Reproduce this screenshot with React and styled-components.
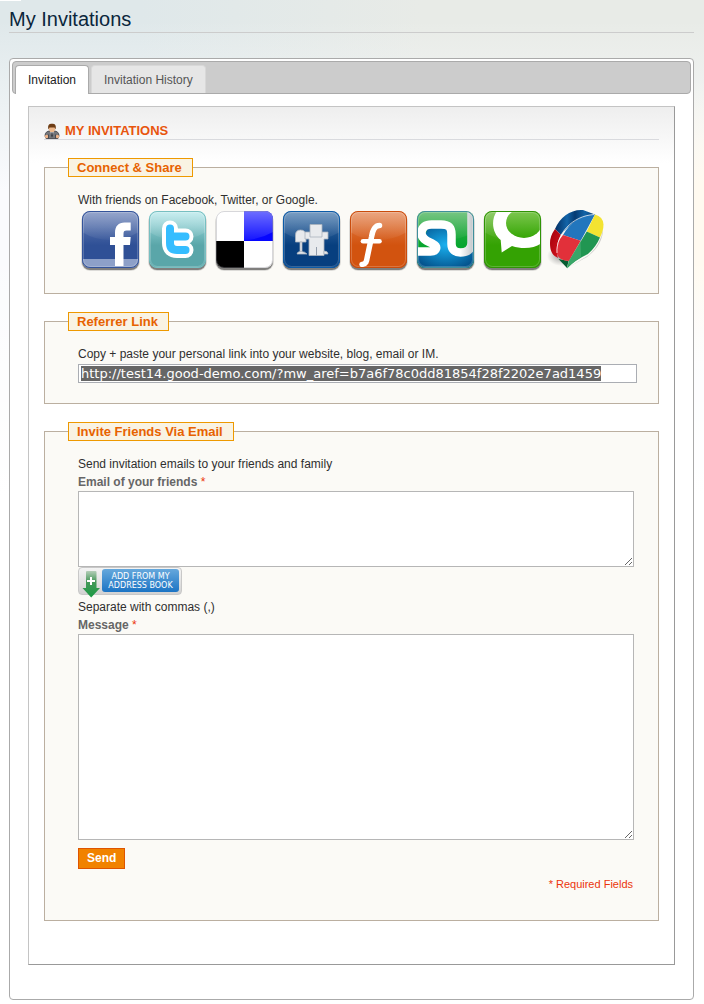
import React, { useEffect, useRef, useState } from "react";
import styled, { createGlobalStyle } from "styled-components";

const GlobalStyle = createGlobalStyle`
  * {
    box-sizing: border-box;
  }

  body {
    margin: 0;
    color: #2f2f2f;
    font: 12px/18px "Liberation Sans", Arial, sans-serif;
    background:
      linear-gradient(#fff, #fff) 0 0 / 21px 1px no-repeat,
      linear-gradient(180deg, rgba(255, 255, 255, 0) 240px, #fff 500px),
      radial-gradient(ellipse 300px 150px at 100% 230px, #fffaf0 30%, rgba(255, 250, 240, 0)),
      linear-gradient(180deg, rgba(250, 251, 253, 0) 20px, #fafbfd 190px),
      linear-gradient(90deg, #dfe8ea 20%, #e8ebe7 60%);
  }
`;

const Page = styled.main`
  padding: 0 10px 4px 9px;
`;

const PageTitle = styled.h1`
  margin: 0 0 25px;
  padding-top: 6px;
  border-bottom: 1px solid #ccc;
  color: #0a263c;
  font-size: 20px;
  font-weight: normal;
  line-height: 26px;
`;

const TabBox = styled.div`
  padding: 2px;
  border: 1px solid #aaa;
  border-radius: 4px;
  background: #fff;
`;

const TabBar = styled.div`
  display: flex;
  gap: 2px;
  height: 33px;
  padding: 3px 2px 0;
  border: 1px solid #aaa;
  border-radius: 4px;
  background: #ccc;
`;

const Tab = styled.button`
  height: ${(props) => (props.$active ? 29 : 28)}px;
  padding: 0 12px;
  border: 1px solid ${(props) => (props.$active ? "#aaa" : "#d8d8d8")};
  border-bottom: 0;
  border-radius: 4px 4px 0 0;
  background: ${(props) => (props.$active ? "#fff" : "#e6e6e6")};
  color: ${(props) => (props.$active ? "#212121" : "#555")};
  font: inherit;
  cursor: pointer;
`;

const Panel = styled.section`
  margin: 12px 16px 32px;
  padding: 15px 15px 43px;
  border: 1px solid #999;
  border-top-color: #c4c4c4;
  border-left-color: #c4c4c4;
  background: #fff linear-gradient(#eee, #fff) 0 0 / 100% 56px no-repeat;
`;

const PanelTitle = styled.h2`
  display: flex;
  align-items: center;
  gap: 5px;
  height: 18px;
  margin: 0 0 18px;
  border-bottom: 1px solid #d9dade;
  color: #e8550e;
  font-size: 13px;
`;

const Fieldset = styled.fieldset`
  min-width: 0;
  margin: 0 0 18px;
  padding: 14px ${(props) => (props.$wide ? 21 : 24)}px 20px 33px;
  border: 1px solid #bbafa0;
  background: #fbfaf6;

  &:last-child {
    margin-bottom: 0;
  }
`;

const Legend = styled.legend`
  height: 19px;
  margin-left: -10px;
  padding: 0 10px 0 8px;
  border: 1px solid #ee9900;
  background: #f9f3e3;
  color: #e76200;
  font-size: 13px;
  font-weight: bold;
  line-height: 17px;
`;

const Text = styled.p`
  margin: 0;
`;

const Label = styled.label`
  display: block;
  color: #666;
  font-weight: bold;
`;

const Star = styled.em`
  color: #eb340a;
  font-style: normal;
  font-weight: normal;
`;

const ShareList = styled.div`
  display: flex;
  flex-wrap: wrap;
  gap: 3px;

  a,
  svg {
    display: block;
  }
`;

const LinkInput = styled.input`
  display: block;
  width: 100%;
  height: 19px;
  margin: 1px 0 0;
  padding: 0 2px;
  border: 1px solid #aaadb3;
  background: #fff;
  color: #2f2f2f;
  font: 13px/15px "DejaVu Sans", Verdana, sans-serif;
  outline: none;

  &::selection {
    background: #666;
    color: #fff;
  }
`;

const TextArea = styled.textarea`
  display: block;
  width: 100%;
  height: ${(props) => props.$height}px;
  padding: 2px;
  border: 1px solid #b6b6b6;
  background: #fff;
  font: inherit;
  resize: both;
`;

const AddressButton = styled.button`
  display: flex;
  align-items: flex-start;
  width: 104px;
  height: 28px;
  margin-bottom: 3px;
  padding: 1px 2px 0 3px;
  border: 1px solid #c8c8c8;
  border-radius: 4px;
  background: linear-gradient(#f4f4f4, #d2d2d2);
  cursor: pointer;

  svg {
    flex: none;
  }
`;

const AddressText = styled.span`
  flex: 1;
  height: 23px;
  margin-left: 1px;
  padding-top: 3px;
  border-radius: 3px;
  background: linear-gradient(#66a8dc, #1b74c4);
  color: #fff;
  font: 8px/9px "DejaVu Sans", Verdana, sans-serif;
  white-space: nowrap;
`;

const SendButton = styled.button`
  display: block;
  height: 21px;
  margin-top: 8px;
  padding: 0 8px;
  border: 1px solid #de5400;
  background: #f18200;
  color: #fff;
  font: bold 12px/19px "Liberation Sans", Arial, sans-serif;
  cursor: pointer;
`;

const Required = styled.p`
  margin: 6px 0 7px;
  padding-right: 1px;
  color: #eb340a;
  font-size: 11px;
  text-align: right;
`;

const PersonIcon = () => (
  <svg width="16" height="16" viewBox="0 0 16 16" aria-hidden="true">
    <path d="M1 13C1 9.500 3 8 6 8h4c3 0 5 1.500 5 5l-1 2.500H2z" fill="#74767b" stroke="#3c3d42" strokeWidth=".8" />
    <path d="M6 8l2 6 2-6z" fill="#c9cbd0" />
    <path d="M7.400 9.500h1.200l.4 3.500-1 1.500L7 13z" fill="#3c3e45" />
    <rect x="5" y="2.500" width="6" height="6.500" rx="2.800" fill="#eeb98c" />
    <path d="M4.400 6.500C3.500 2 5 .8 8 .8s4.500 1.200 3.600 5.700l-1.100-2H5.500z" fill="#6d3c14" />
    <circle cx="2.600" cy="13.500" r="1.700" fill="#f0b489" />
    <circle cx="13.400" cy="13.500" r="1.700" fill="#f0b489" />
    <path d="M4.500 11.500v4M11.500 11.500v4" stroke="#3c3d42" strokeWidth=".8" />
  </svg>
);

const ArrowIcon = () => (
  <svg width="19" height="30" viewBox="0 0 19 30" aria-hidden="true">
    <defs>
      <linearGradient id="arrow" x1="0" y1="0" x2="0" y2="1">
        <stop offset="0" stopColor="#b4cdb8" />
        <stop offset=".4" stopColor="#46985a" />
        <stop offset="1" stopColor="#199b43" />
      </linearGradient>
    </defs>
    <path d="M5 2h8.500q1 0 1 1v16H18l-8.800 9.500L.5 19H4V3q0-1 1-1z" fill="url(#arrow)" />
    <path d="M9 8v8M5 12h8" stroke="#fff" strokeWidth="2" />
  </svg>
);

// glossy rounded square shared by all the square share icons
const Tile = ({ id, from, to, edge, gloss = 0.3, children }) => (
  <svg width="64" height="64" viewBox="0 0 64 64" aria-hidden="true">
    <defs>
      <linearGradient id={`${id}-bg`} x1="0" y1="0" x2="0" y2="1">
        <stop offset="0" stopColor={from} />
        <stop offset=".6" stopColor={to} />
      </linearGradient>
      <linearGradient id={`${id}-gloss`} x1="0" y1="0" x2="0" y2="1">
        <stop offset="0" stopColor="#fff" stopOpacity={gloss} />
        <stop offset="1" stopColor="#fff" stopOpacity=".03" />
      </linearGradient>
      <clipPath id={`${id}-clip`}>
        <rect x="4" y="2" width="57" height="57" rx="8" />
      </clipPath>
    </defs>
    <rect x="3" y="4" width="59" height="58" rx="9" fill="#000" opacity=".12" />
    <rect x="4" y="4" width="57" height="57" rx="8" fill="#000" opacity=".42" />
    <g clipPath={`url(#${id}-clip)`}>
      <rect x="4" y="2" width="57" height="57" fill={`url(#${id}-bg)`} />
      {gloss > 0 && <path d="M4 2h57v21Q47 31 32 31T4 23z" fill={`url(#${id}-gloss)`} />}
      {children}
    </g>
    <rect x="4.500" y="2.500" width="56" height="56" rx="7.500" fill="none" stroke={edge} />
    {gloss > 0 && (
      <rect x="5.500" y="3.500" width="54" height="54" rx="7" fill="none" stroke="#fff" opacity=".2" />
    )}
  </svg>
);

const FacebookIcon = () => (
  <Tile id="fb" from="#6c83b8" to="#2f5096" edge="#34549a">
    <rect x="4" y="50" width="57" height="9" fill="#8da0c8" />
    <path
      d="M37 57V36h-5v-8h5v-4c0-7 3.500-10.500 9.500-10.500h6.200v8h-4c-2.700 0-3.200 1-3.200 3.500v3h7.200l-.7 8h-6.500v21z"
      fill="#fff"
    />
  </Tile>
);

const TwitterIcon = () => (
  <Tile id="tw" from="#a8e4e7" to="#5aa6a9" edge="#77bfc1" gloss={0.4}>
    <g fill="none" strokeLinecap="round" strokeLinejoin="round">
      <path d="M25 19.500V34q0 7 7 7h8.500M25 27.500h15.500" stroke="#fff" strokeWidth="16" />
      <path d="M25 19.500V34q0 7 7 7h8.500M25 27.500h15.500" stroke="#35bdff" strokeWidth="8" />
    </g>
  </Tile>
);

const DeliciousIcon = () => (
  <Tile id="de" from="#fff" to="#fff" edge="rgba(140,140,150,.35)" gloss={0}>
    <defs>
      <linearGradient id="de-blue" x1="0" y1="0" x2="0" y2="1">
        <stop offset="0" stopColor="#6e6eff" />
        <stop offset="1" stopColor="#1616ff" />
      </linearGradient>
    </defs>
    <path d="M32 2h29v30H32z" fill="#0606ff" />
    <path d="M32 2h29v21Q47 31 32 31z" fill="url(#de-blue)" />
    <path d="M4 32h28v27H4z" fill="#000" />
  </Tile>
);

const DiggIcon = () => (
  <Tile id="di" from="#4577ac" to="#073f7f" edge="#0b5ba8">
    <g fill="#e8eaed" stroke="#aab2bd" strokeWidth=".8">
      <path d="M16.500 33v-7q0-5 5-5t5.500 5v7z" />
      <path d="M21 33h2v11h-2z" />
      <path d="M18 45q0-2.500 4-2.500T28 45z" />
      <path d="M26 23h23v7h-4v16.500H30V30h-4z" />
      <path d="M31 15.500h12V28H31z" />
      <path d="M45 42q4 0 4 3h-4z" />
    </g>
    <path d="M37.500 38v9" stroke="#949eac" />
  </Tile>
);

const ScriptFIcon = () => (
  <Tile id="sf" from="#e3834f" to="#d2530f" edge="#ca4c0c">
    <g fill="none" stroke="#fff" strokeLinecap="round">
      <path d="M33.500 16.500C28 16.500 26.500 22 25.500 28l-4 19C20.500 53 20 55 16 55.500" strokeWidth="5.500" />
      <path d="M17 32.300h16.500" strokeWidth="4.600" />
    </g>
  </Tile>
);

const StumbleIcon = () => (
  <Tile id="su" from="#3fae50" to="#08a62f" edge="#3f8f9b">
    <defs>
      <radialGradient id="su-blue" cx=".5" cy=".45" r=".6">
        <stop offset="0" stopColor="#19b0ef" />
        <stop offset="1" stopColor="#04558f" />
      </radialGradient>
      <linearGradient id="su-white" x1="0" y1="0" x2="1" y2="0">
        <stop offset="0" stopColor="#fff" />
        <stop offset=".8" stopColor="#fff" />
        <stop offset="1" stopColor="#c9cdd0" />
      </linearGradient>
    </defs>
    <path d="M15 17h20q6 2 6 9v12q1 7 8 6 6 0 12-10v25H4V44h14l6-5-4-7-8-4z" fill="url(#su-blue)" />
    <path
      d="M2 42.500h15.500c6.500 0 7.500-5 2.500-7.500C16 32.500 8.500 31 8.500 24c0-6 4.500-8.500 10-8.500H28c8 0 10.500 2.500 10.500 10V35c0 6 4 8.500 9 8.500 7 0 11-3.500 11-9.500V0"
      fill="none"
      stroke="url(#su-white)"
      strokeWidth="8.500"
    />
  </Tile>
);

const TechnoratiIcon = () => (
  <Tile id="te" from="#6fbd3c" to="#34a203" edge="#2f9305" gloss={0.25}>
    <defs>
      <linearGradient id="te-eye" x1="0" y1="0" x2="0" y2="1">
        <stop offset="0" stopColor="#86cb58" />
        <stop offset="1" stopColor="#36a606" />
      </linearGradient>
    </defs>
    <path
      d="M17 2C10 12 13 25 20.700 31l1 12.500L32 37c12 4 24 2 31-4V2z"
      fill="#fff"
    />
    <ellipse cx="44" cy="14" rx="18" ry="15" fill="url(#te-eye)" />
    <path d="M35 2h26v6Q56 2 49 0z" fill="#7fc653" />
  </Tile>
);

const BuzzIcon = () => (
  <svg width="64" height="64" viewBox="0 0 64 64" aria-hidden="true">
    <defs>
      <radialGradient id="bz-shadow">
        <stop offset="0" stopColor="#555" stopOpacity=".6" />
        <stop offset="1" stopColor="#777" stopOpacity="0" />
      </radialGradient>
      <linearGradient id="bz-blue">
        <stop offset="0" stopColor="#042f63" />
        <stop offset=".3" stopColor="#1264a8" />
        <stop offset=".5" stopColor="#063b73" />
        <stop offset=".75" stopColor="#1264a8" />
        <stop offset="1" stopColor="#063b73" />
      </linearGradient>
      <linearGradient id="bz-red" x1="0" y1="0" x2="1" y2="1">
        <stop offset="0" stopColor="#a30009" />
        <stop offset="1" stopColor="#d81621" />
      </linearGradient>
    </defs>
    <ellipse cx="14" cy="47" rx="14" ry="10" fill="url(#bz-shadow)" />
    <path d="M56 20q-2 15-14 26L22 58l18-10Q56 36 56 20z" fill="#888" opacity=".4" />
    <path d="M8 20C13 8 24 0 36 1l12 4.500C33 8 22 15 14 26z" fill="url(#bz-blue)" />
    <path d="M8 20l6 6C9 35 9 42 11 49 5 46 3 42 3 34q0-7 5-14z" fill="url(#bz-red)" />
    <path d="M11.500 50l10 2L20 59z" fill="#075d32" />
    <path d="M16 26C23 13 34 6 48 5.500L33.700 31.700z" fill="#2276bd" />
    <path d="M16 26l17.700 5.700L22 52Q11 52 9.500 43 9 34 16 26z" fill="#e2303a" />
    <path d="M48 5.500q8 2 8.500 10 0 6-3.500 13l-13.300-6z" fill="#f3e331" />
    <path d="M39.700 22.500L53 28.500Q49 38 41 45 28 51 20 59.500l2-7.500z" fill="#219652" />
    <path d="M33.700 31.700L22 52l-2 7q5-5 14-11z" fill="#45ad72" opacity=".7" />
    <path d="M10 44C9 25 25 7 47 5.500" fill="none" stroke="#fff" strokeWidth=".9" opacity=".8" />
  </svg>
);

const shareLinks = [
  { name: "Facebook", Icon: FacebookIcon },
  { name: "Twitter", Icon: TwitterIcon },
  { name: "Delicious", Icon: DeliciousIcon },
  { name: "Digg", Icon: DiggIcon },
  { name: "Friendster", Icon: ScriptFIcon },
  { name: "StumbleUpon", Icon: StumbleIcon },
  { name: "Technorati", Icon: TechnoratiIcon },
  { name: "Google Buzz", Icon: BuzzIcon },
];

const tabs = ["Invitation", "Invitation History"];

const App = () => {
  const [activeTab, setActiveTab] = useState(tabs[0]);
  const linkRef = useRef(null);

  useEffect(() => {
    linkRef.current.focus({ preventScroll: true });
    linkRef.current.select();
  }, []);

  return (
    <>
      <GlobalStyle />
      <Page>
        <PageTitle>My Invitations</PageTitle>
        <TabBox>
          <TabBar role="tablist">
            {tabs.map((tab) => (
              <Tab
                key={tab}
                type="button"
                role="tab"
                aria-selected={tab === activeTab}
                $active={tab === activeTab}
                onClick={() => setActiveTab(tab)}
              >
                {tab}
              </Tab>
            ))}
          </TabBar>
          <Panel>
            <PanelTitle>
              <PersonIcon />
              MY INVITATIONS
            </PanelTitle>

            <Fieldset>
              <Legend>Connect &amp; Share</Legend>
              <Text>With friends on Facebook, Twitter, or Google.</Text>
              <ShareList>
                {shareLinks.map(({ name, Icon }) => (
                  <a key={name} href="#share" aria-label={name}>
                    <Icon />
                  </a>
                ))}
              </ShareList>
            </Fieldset>

            <Fieldset $wide>
              <Legend>Referrer Link</Legend>
              <Text as="label" htmlFor="referrer">
                Copy + paste your personal link into your website, blog, email or IM.
              </Text>
              <LinkInput
                id="referrer"
                ref={linkRef}
                readOnly
                value="http://test14.good-demo.com/?mw_aref=b7a6f78c0dd81854f28f2202e7ad1459"
              />
            </Fieldset>

            <Fieldset>
              <Legend>Invite Friends Via Email</Legend>
              <Text>Send invitation emails to your friends and family</Text>
              <Label htmlFor="emails">
                Email of your friends <Star>*</Star>
              </Label>
              <TextArea id="emails" $height={76} />
              <AddressButton type="button">
                <ArrowIcon />
                <AddressText>
                  ADD FROM MY
                  <br />
                  ADDRESS BOOK
                </AddressText>
              </AddressButton>
              <Text>Separate with commas (,)</Text>
              <Label htmlFor="message">
                Message <Star>*</Star>
              </Label>
              <TextArea id="message" $height={206} />
              <SendButton type="button">Send</SendButton>
              <Required>* Required Fields</Required>
            </Fieldset>
          </Panel>
        </TabBox>
      </Page>
    </>
  );
};

export default App;
